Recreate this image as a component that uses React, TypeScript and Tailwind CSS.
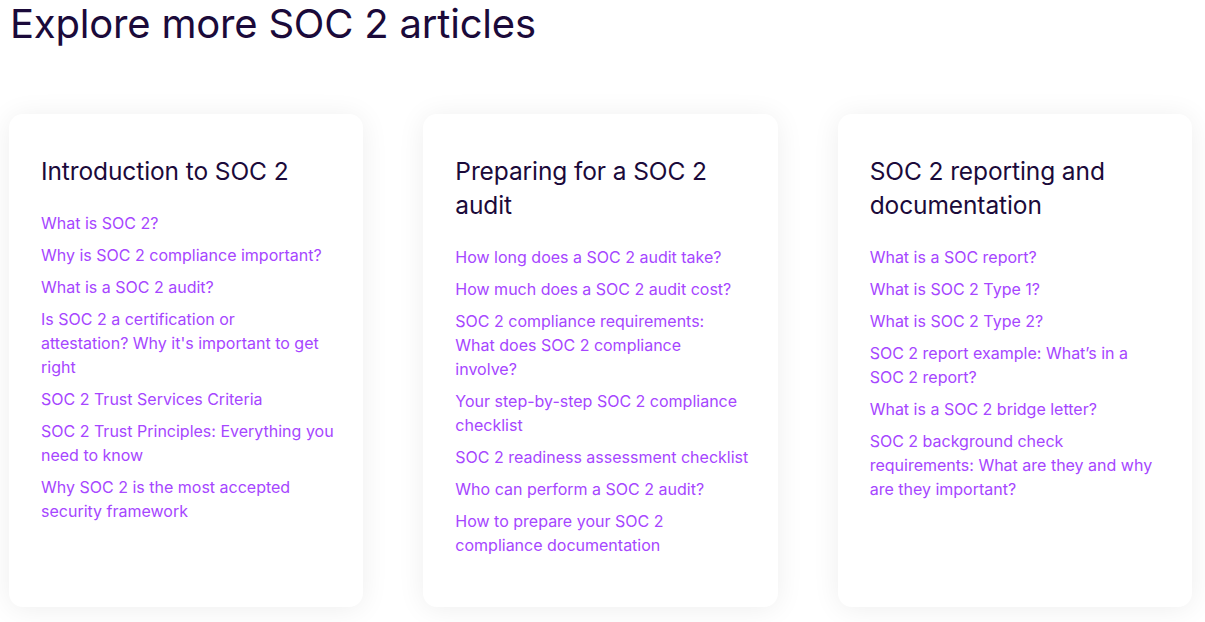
// Line breaks are written out so the columns wrap the way the original page does.
const columns = [
  {
    title: "Introduction to SOC 2",
    links: [
      "What is SOC 2?",
      "Why is SOC 2 compliance important?",
      "What is a SOC 2 audit?",
      "Is SOC 2 a certification or\nattestation? Why it's important to get\nright",
      "SOC 2 Trust Services Criteria",
      "SOC 2 Trust Principles: Everything you\nneed to know",
      "Why SOC 2 is the most accepted\nsecurity framework",
    ],
  },
  {
    title: "Preparing for a SOC 2\naudit",
    links: [
      "How long does a SOC 2 audit take?",
      "How much does a SOC 2 audit cost?",
      "SOC 2 compliance requirements:\nWhat does SOC 2 compliance\ninvolve?",
      "Your step-by-step SOC 2 compliance\nchecklist",
      "SOC 2 readiness assessment checklist",
      "Who can perform a SOC 2 audit?",
      "How to prepare your SOC 2\ncompliance documentation",
    ],
  },
  {
    title: "SOC 2 reporting and\ndocumentation",
    links: [
      "What is a SOC report?",
      "What is SOC 2 Type 1?",
      "What is SOC 2 Type 2?",
      "SOC 2 report example: What’s in a\nSOC 2 report?",
      "What is a SOC 2 bridge letter?",
      "SOC 2 background check\nrequirements: What are they and why\nare they important?",
    ],
  },
];

export default function App() {
  return (
    <div className="min-h-[622px] w-full bg-white pl-[9px] pr-[13px] font-['Inter',sans-serif] text-[#1b0a3a]">
      <h1 className="pl-px text-[40px] leading-[48px] font-normal tracking-[-0.2px]">
        Explore more SOC 2 articles
      </h1>

      <div className="mt-[66px] grid grid-cols-3 gap-[60px]">
        {columns.map((col) => (
          <div
            key={col.title}
            className="rounded-[14px] bg-white pl-8 pr-4 pt-10 pb-[50px] shadow-[0_2px_28px_rgba(0,0,0,0.07)]"
          >
            <h2 className="mb-[23px] whitespace-pre-line text-[24.5px] leading-[34px] font-normal tracking-[-0.1px]">
              {col.title}
            </h2>
            <ul className="flex flex-col gap-2">
              {col.links.map((link) => (
                <li key={link} className="whitespace-pre-line">
                  <a href="#" className="text-base leading-6 text-[#a646ff]">
                    {link}
                  </a>
                </li>
              ))}
            </ul>
          </div>
        ))}
      </div>
    </div>
  );
}
